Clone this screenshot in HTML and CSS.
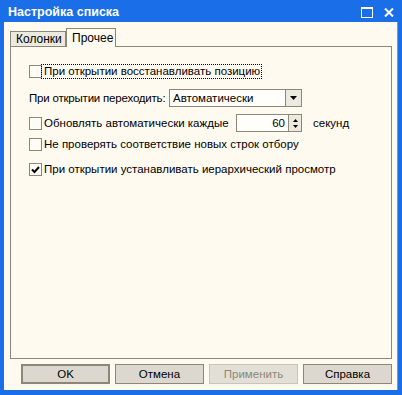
FILE: index.html
```html
<!DOCTYPE html>
<html lang="ru">
<head>
<meta charset="utf-8">
<link rel="stylesheet" href="styles.css">
</head>
<body>
<div class="window">
  <div class="titlebar">
    <span class="title">Настройка списка</span>
    <div class="tb-buttons">
      <svg class="tb-max" width="12" height="11" viewBox="0 0 12 11"><rect x="0.5" y="0.5" width="11" height="10" fill="none" stroke="#fff" stroke-width="1"/><rect x="0" y="0" width="12" height="2" fill="#fff"/></svg>
      <svg class="tb-close" width="10" height="9" viewBox="0 0 10 9"><path d="M1 0.5 L9 8.5 M9 0.5 L1 8.5" stroke="#fff" stroke-width="2" fill="none"/></svg>
    </div>
  </div>
  <div class="client">
    <div class="tabs">
      <div class="tab">Колонки</div>
      <div class="tab active">Прочее</div>
    </div>
    <div class="panel">
      <div class="row r1">
        <span class="cb"></span><span class="label focus">При открытии восстанавливать позицию</span>
      </div>
      <div class="row r2">
        <span class="label plain">При открытии переходить:</span>
        <div class="combo"><span class="combo-text">Автоматически</span><span class="combo-btn"><svg width="7" height="4" viewBox="0 0 7 4"><path d="M0 0H7L3.5 4Z" fill="#000"/></svg></span></div>
      </div>
      <div class="row r3">
        <span class="cb"></span><span class="label wide">Обновлять автоматически каждые</span>
        <div class="spin"><span class="spin-text">60</span><span class="spin-btn"><svg width="5" height="3" viewBox="0 0 5 3"><path d="M0 3H5L2.5 0Z" fill="#000"/></svg><svg width="5" height="3" viewBox="0 0 5 3"><path d="M0 0H5L2.5 3Z" fill="#000"/></svg></span></div>
        <span class="label sec">секунд</span>
      </div>
      <div class="row r4">
        <span class="cb"></span><span class="label">Не проверять соответствие новых строк отбору</span>
      </div>
      <div class="row r5">
        <span class="cb checked"><svg width="9" height="8" viewBox="0 0 9 8"><path d="M1 3.5 L3.5 6 L8 1" stroke="#000" stroke-width="2" fill="none"/></svg></span><span class="label">При открытии устанавливать иерархический просмотр</span>
      </div>
    </div>
    <div class="buttons">
      <div class="btn default">OK</div>
      <div class="btn">Отмена</div>
      <div class="btn disabled">Применить</div>
      <div class="btn">Справка</div>
    </div>
  </div>
</div>
</body>
</html>
```
FILE: styles.css
```css
html, body {
  margin: 0;
  padding: 0;
}
body {
  font-family: "Liberation Sans", Arial, sans-serif;
  font-size: 11.5px;
  color: #000;
}
.window {
  width: 402px;
  height: 395px;
  box-sizing: border-box;
  background: #1a6ee8;
  display: flex;
  flex-direction: column;
  padding: 0 4px 5px 4px;
}
.titlebar {
  height: 22px;
  display: flex;
  align-items: center;
  justify-content: space-between;
  flex: none;
}
.title {
  color: #fff;
  font-family: "Liberation Sans", Arial, sans-serif;
  font-weight: bold;
  font-size: 12.5px;
  padding-left: 4px;
  padding-top: 1px;
}
.tb-buttons {
  display: flex;
  align-items: center;
  gap: 11px;
  padding-right: 4px;
  padding-top: 3px;
}
.client {
  flex: 1;
  background: #fffaf0;
  display: flex;
  flex-direction: column;
  padding: 6px 5px 0 6px;
  border-right: 1px solid #5f9cf5;
}
.tabs {
  display: flex;
  align-items: flex-end;
  height: 18px;
  position: relative;
  z-index: 1;
}
.tab {
  height: 15px;
  box-sizing: border-box;
  padding: 0 5px;
  border: 1px solid #8c8778;
  border-bottom: 0;
  background: #ece9df;
  line-height: 15px;
  width: 56px;
  font-size: 12px;
}
.tab.active {
  height: 19px;
  margin-bottom: -1px;
  width: 50px;
  background: #fffaf0;
  line-height: 19px;
}
.panel {
  height: 313px;
  box-sizing: border-box;
  border: 1px solid #8c8778;
  display: flex;
  flex-direction: column;
  padding: 18px 0 0 18px;
}
.row {
  display: flex;
  align-items: center;
  height: 13px;
}
.r1 { margin-bottom: 11px; }
.r2 { height: 18px; margin-bottom: 7px; }
.r3 { height: 18px; margin-bottom: 6px; }
.r4 { margin-bottom: 12px; }
.cb {
  width: 13px;
  height: 13px;
  box-sizing: border-box;
  border: 1px solid #8c8778;
  background: #fffcf6;
  display: flex;
  align-items: center;
  justify-content: center;
  flex: none;
}
.label {
  padding-left: 2px;
  line-height: 13px;
  white-space: nowrap;
  flex: none;
}
.label.focus {
  outline: 1px dotted #000;
  outline-offset: 0;
  padding-right: 1px;
}
.label.plain {
  padding-left: 0;
  width: 140px;
  letter-spacing: -0.2px;
}
.combo {
  width: 133px;
  height: 18px;
  box-sizing: border-box;
  border: 1px solid #8c8778;
  background: #fffefa;
  display: flex;
  align-items: stretch;
  flex: none;
}
.combo-text {
  flex: 1;
  padding-left: 3px;
  line-height: 16px;
}
.combo-btn {
  width: 16px;
  box-sizing: border-box;
  border-left: 1px solid #8c8778;
  background: #ece9df;
  display: flex;
  align-items: center;
  justify-content: center;
}
.label.wide {
  width: 194px;
  box-sizing: border-box;
}
.spin {
  width: 66px;
  height: 18px;
  box-sizing: border-box;
  border: 1px solid #8c8778;
  background: #fffefa;
  display: flex;
  align-items: stretch;
  flex: none;
}
.spin-text {
  flex: 1;
  text-align: right;
  padding-right: 3px;
  line-height: 16px;
}
.spin-btn {
  width: 13px;
  box-sizing: border-box;
  border-left: 1px solid #8c8778;
  background: #ece9df;
  display: flex;
  flex-direction: column;
  align-items: center;
  justify-content: center;
  gap: 3px;
}
.label.sec {
  padding-left: 11px;
}
.buttons {
  display: flex;
  gap: 5px;
  padding: 5px 0 0 11px;
}
.btn {
  width: 89px;
  height: 20px;
  box-sizing: border-box;
  border: 1px solid #8c8778;
  background: #dcd8cf;
  text-align: center;
  line-height: 18px;
}
.btn.default {
  border: 2px solid #8c8778;
  line-height: 16px;
}
.btn.disabled {
  color: #8c8778;
  background: #e2dfd7;
  border-color: #c9c5ba;
}
```
